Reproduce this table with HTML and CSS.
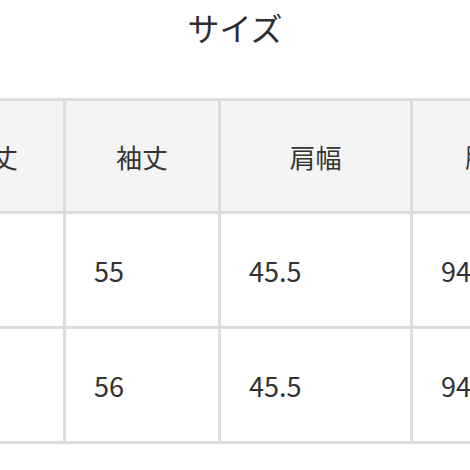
FILE: index.html
```html
<!DOCTYPE html>
<html lang="ja">
<head>
<meta charset="utf-8">
<link rel="stylesheet" href="styles.css">
</head>
<body>
<h2 class="title">サイズ</h2>
<div class="scroller">
  <table class="size-table">
    <colgroup>
      <col class="c1"><col class="c2"><col class="c3"><col class="c4">
    </colgroup>
    <thead>
      <tr><th>着丈</th><th>袖丈</th><th>肩幅</th><th>胸囲</th></tr>
    </thead>
    <tbody>
      <tr><td>70</td><td>55</td><td>45.5</td><td>94</td></tr>
      <tr><td>72</td><td>56</td><td>45.5</td><td>94</td></tr>
    </tbody>
  </table>
</div>
</body>
</html>
```

FILE: styles.css
```css
html, body {
  margin: 0;
  padding: 0;
  background: #ffffff;
}
body {
  font-family: "Noto Sans CJK JP", "Noto Sans", sans-serif;
  color: #333333;
}
.title {
  margin: 0;
  padding-top: 4px;
  font-size: 32px;
  line-height: 46px;
  font-weight: 400;
  text-align: center;
  color: #2e2e2e;
}
.scroller {
  margin-top: 48px;
  overflow: hidden;
  width: 470px;
}
.size-table {
  margin-left: -82px;
  border-collapse: collapse;
  table-layout: fixed;
  width: 651px;
}
.c1 { width: 145px; }
.c2 { width: 155px; }
.c3 { width: 192px; }
.c4 { width: 159px; }
.size-table th,
.size-table td {
  border: 3px solid #dcdcdc;
  padding: 0 0 0 28px;
  vertical-align: middle;
  box-sizing: border-box;
}
.size-table th {
  height: 113px;
  background: #f4f4f4;
  font-size: 26px;
  font-weight: 400;
  text-align: center;
  padding: 0;
}
.size-table td {
  height: 115px;
  font-size: 27px;
  text-align: left;
}
```
